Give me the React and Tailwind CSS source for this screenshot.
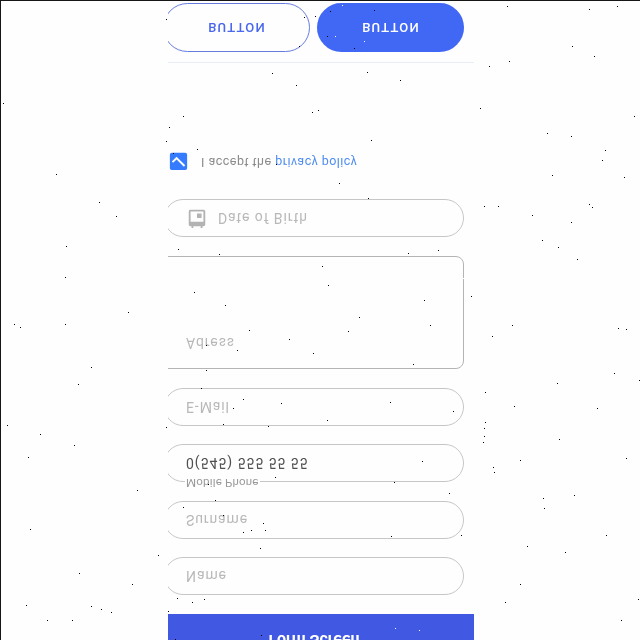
import { MdCheckBox, MdEvent } from "react-icons/md";

const DARK_SPECKS = [
  [166,19],[3,103],[169,127],[166,141],[56,174],[99,202],[116,216],[66,246],[65,277],[128,312],
  [14,324],[20,327],[65,324],[91,367],[78,384],[7,425],[166,427],[40,434],[74,445],[28,457],[137,490],[30,529],[158,555],[79,573],[132,584],[26,605],[91,606],[101,609],[111,612],[47,620],[72,620],[168,611],
  [507,6],[617,6],[589,9],[572,46],[509,61],[489,66],[594,56],[480,108],[634,116],[547,133],[571,136],[605,150],[602,160],[552,175],[624,177],[484,206],[498,206],[589,204],[592,207],[532,215],[571,222],[542,240],[558,247],[577,259],[471,296],
  [512,325],[492,336],[618,328],[626,329],[614,373],[557,383],[639,380],[485,392],[514,406],[597,408],[485,422],[484,428],[484,436],[483,442],[559,439],[520,460],[626,458],[493,467],[494,472],[574,495],[543,498],[544,508],[606,535],[527,546],[565,552],[520,584],[505,602],[638,599],[621,620],
  [304,17],[315,16],[299,46],[272,73],[330,11],[327,36],[354,48],[374,10],[367,72],[296,85],[312,112],[318,110],[400,80],[183,116],[371,140],[197,149],[173,153],[276,164],[339,183],[368,198],
  [178,249],[219,254],[408,253],[438,250],[322,266],[328,285],[194,292],[225,305],[424,300],[359,317],[430,325],[348,331],[249,330],[289,339],[206,345],[237,350],[313,353],[413,364],[206,370],
  [201,388],[243,399],[281,403],[233,408],[223,424],[268,426],[327,420],[275,477],[208,484],[390,402],[453,411],[422,461],[394,482],[449,493],[461,535],[391,536],
  [215,500],[183,507],[223,515],[263,523],[243,532],[251,530],[265,530],[260,548],[177,598],[192,602],[204,599],[261,635],[175,639],
];
const LIGHT_SPECKS = [[342,5],[335,36],[364,41],[395,628],[419,630],[463,278]];

const toPath = (points) => points.map(([x, y]) => `M${x} ${y}h1v1h-1z`).join("");

function Specks() {
  return (
    <svg className="pointer-events-none absolute inset-0" width="640" height="640" shapeRendering="crispEdges" aria-hidden="true">
      <path d={toPath(DARK_SPECKS)} fill="#000" />
      <path d={toPath(LIGHT_SPECKS)} fill="#fff" />
    </svg>
  );
}

function Field({ children, className = "" }) {
  return (
    <div className={`relative flex h-[38px] w-[300px] shrink-0 items-center rounded-full border border-[#c6c6c6] pl-[21px] text-sm tracking-[0.9px] text-[#b8b8b8] ${className}`}>
      {children}
    </div>
  );
}

export default function App() {
  return (
    <div className="relative h-[640px] w-[640px] overflow-hidden bg-[#fefefe] font-['Roboto','Liberation_Sans',sans-serif]">
      <div className="flex h-full -scale-y-100 border-b border-l border-[#161616]">
        <main className="ml-[167px] flex w-[306px] flex-col overflow-hidden">
          <header className="flex h-[26px] shrink-0 items-start justify-center overflow-hidden bg-[#4058e2] pr-[14px] text-base font-bold text-white">
            <h1 className="-mt-[10px] leading-[20px] tracking-[-0.05px]">Form Screen</h1>
          </header>
          <div className="-ml-1 flex w-[300px] flex-col">
            <Field className="mt-[19px]">Name</Field>
            <Field className="mt-[18px]">Surname</Field>
            <Field className="mt-[19px]">
              <span className="absolute -top-[9px] left-[20px] bg-[#fefefe] px-px text-[11.5px] leading-[14px] tracking-[0.2px] text-[#999]">Mobile Phone</span>
              <span className="tracking-[0.98px] text-[#505050]">0(545) 555 55 55</span>
            </Field>
            <Field className="mt-[18px]">E-Mail</Field>
            <div className="-ml-2 mt-[19px] h-[113px] w-[308px] rounded-lg border border-[#b4b4b4] pt-[15px] pl-[29px] text-sm tracking-[0.9px] text-[#b8b8b8]">Adress</div>
            <Field className="mt-[19px]">
              <MdEvent className="mr-[10px] h-[22px] w-[22px] text-[#b3b3b3]" />
              Date of Birth
            </Field>
            <label className="mt-[26px] flex h-[23px] items-center pl-[3px] text-[12.5px] tracking-[0.48px] text-[#8b8b8b]">
              <MdCheckBox className="mr-[11px] h-[23px] w-[23px] text-[#347bff]" />
              <span>I accept the <a className="text-[#4f8df0]">privacy policy</a></span>
            </label>
          </div>
          <footer className="mt-[87px] border-t border-[#e9edf8] pt-[10px]">
            <div className="-ml-[5px] flex gap-[7px] text-[13px] font-medium tracking-[1.15px]">
              <button className="h-[49px] w-[147px] shrink-0 rounded-full border border-[#657cde] pl-px text-[#4968ed]">BUTTON</button>
              <button className="h-[49px] w-[147px] shrink-0 rounded-full bg-[#4167f5] pl-px text-white">BUTTON</button>
            </div>
          </footer>
        </main>
      </div>
      <Specks />
    </div>
  );
}
